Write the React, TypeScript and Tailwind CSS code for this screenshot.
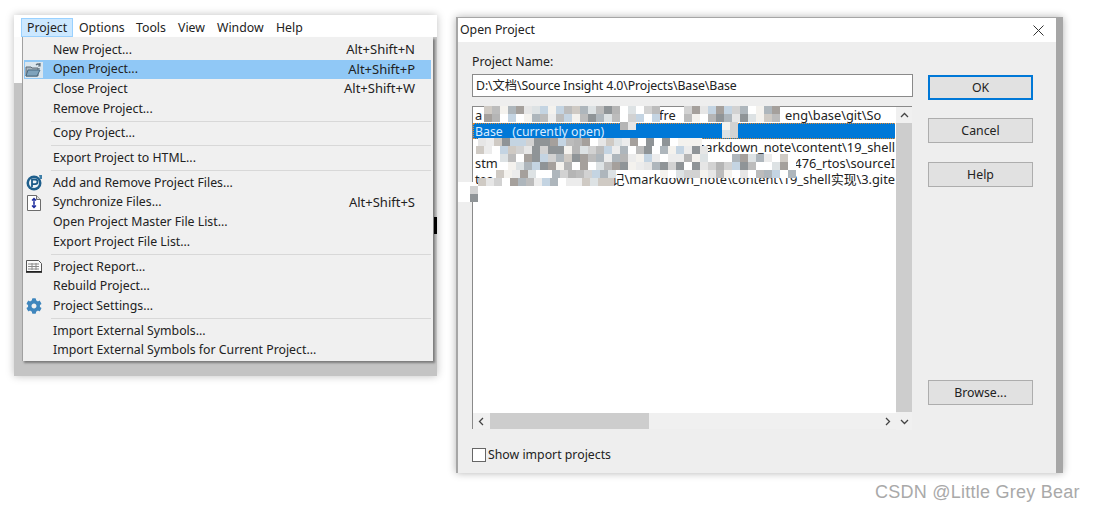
import { FaCog } from 'react-icons/fa'

const font = { fontFamily: '"Noto Sans", "Noto Sans CJK SC", sans-serif' }

const OpenIcon = () => (
  <svg width="18" height="16" viewBox="0 0 18 16" className="block">
    <rect x="0" y="0" width="18" height="16" fill="#dbe6ee" />
    <path d="M1 5h5l1 1h6v8H1z" fill="#a9b5bf" stroke="#5d6b76" strokeWidth="1" />
    <path d="M3 8h12l-3 6H1z" fill="#7fa3bc" stroke="#4a6a80" strokeWidth="1" />
    <path d="M11 3c2-2 3-1 4 0M15 1v3h-2M14 7v-1" fill="none" stroke="#5c6e7c" strokeWidth="1.2" />
  </svg>
)

const PIcon = () => (
  <svg width="17" height="17" viewBox="0 0 17 17" className="block">
    <circle cx="8" cy="9" r="7.5" fill="#1f5f8c" />
    <circle cx="8" cy="9" r="5" fill="#eef4f8" />
    <path d="M6 13V5.500h3.200a2.200 2.200 0 0 1 0 4.600H6" fill="none" stroke="#1a5a88" strokeWidth="1.800" />
    <path d="M13 1h3v4h-2z" fill="#3f7fa8" />
  </svg>
)

const SyncIcon = () => (
  <svg width="14" height="16" viewBox="0 0 14 16" className="block">
    <path d="M.5.500h9l4 4v11H.5z" fill="#fff" stroke="#6c6c6c" />
    <path d="M9.500.500v4h4" fill="#ddd" stroke="#6c6c6c" />
    <path d="M7 3.500v5M5 5.500l2-2 2 2" fill="none" stroke="#1b2a9c" strokeWidth="1.300" />
    <path d="M7 7.500v5M5 10.500l2 2 2-2" fill="none" stroke="#1b2a9c" strokeWidth="1.300" />
  </svg>
)

const ReportIcon = () => (
  <svg width="16" height="13" viewBox="0 0 16 13" className="block">
    <path d="M.5.500h12l3 3v8H.5z" fill="#fafafa" stroke="#555" />
    <path d="M2 4h11M2 6.500h11M2 9h11M6 3v7M10 3v7" stroke="#8a8a8a" strokeWidth="1" />
    <path d="M0 12h16" stroke="#111" strokeWidth="1.500" />
  </svg>
)

const menuItems: any[] = [
  { label: 'New Project...', keys: 'Alt+Shift+N' },
  { label: 'Open Project...', keys: 'Alt+Shift+P', icon: <OpenIcon />, active: true },
  { label: 'Close Project', keys: 'Alt+Shift+W' },
  { label: 'Remove Project...' },
  { sep: true },
  { label: 'Copy Project...' },
  { sep: true },
  { label: 'Export Project to HTML...' },
  { sep: true },
  { label: 'Add and Remove Project Files...', icon: <PIcon /> },
  { label: 'Synchronize Files...', keys: 'Alt+Shift+S', icon: <SyncIcon /> },
  { label: 'Open Project Master File List...' },
  { label: 'Export Project File List...' },
  { sep: true },
  { label: 'Project Report...', icon: <ReportIcon /> },
  { label: 'Rebuild Project...' },
  { label: 'Project Settings...', icon: <FaCog size={16} color="#3f86bd" /> },
  { sep: true },
  { label: 'Import External Symbols...' },
  { label: 'Import External Symbols for Current Project...' },
]

const menuBar = [
  { label: 'Project', cls: 'w-[52px] ml-[7px] border border-[#99d1ff] bg-[#cce8ff] text-[#222]' },
  { label: 'Options', cls: 'w-[57px] pl-[6px]' },
  { label: 'Tools', cls: 'w-[42px] pl-[6px]' },
  { label: 'View', cls: 'w-[39px] pl-[6px]' },
  { label: 'Window', cls: 'w-[59px] pl-[6px]' },
  { label: 'Help', cls: 'w-[40px] pl-[6px]' },
]

// redaction blur: [top, left, right] of each 8px band of cells
const mosaicBands = [
  [106, 484, 654], [106, 684, 780],
  [114, 484, 654], [114, 684, 780],
  [122, 620, 636], [122, 722, 738],
  [130, 722, 738],
  [138, 478, 696], [146, 476, 704],
  [154, 500, 796], [162, 500, 796],
  [170, 496, 612], [170, 660, 796],
  [178, 478, 612], [186, 470, 478], [194, 470, 478],
]
const mosaicColors = ['#e6e6e6', '#d2d2d2', '#bcbcbc', '#f4f2ee', '#cfcac4', '#aeb6bc', '#ffffff', '#dde2e4', '#a5a09c', '#c4d4e2', '#ececec', '#b5b5b5', '#ffffff', '#8f9497']

const Mosaic = () => {
  const cells: { x: number; y: number; c: string }[] = []
  let seed = 7
  mosaicBands.forEach(([y, a, b]) => {
    for (let x = a; x < b; x += 8) {
      seed = (seed * 31 + 11) % 1009
      cells.push({ x, y, c: mosaicColors[seed % mosaicColors.length] })
    }
  })
  return (
    <svg className="absolute left-0 top-0" width="1095" height="511">
      <rect x="458" y="182" width="18" height="20" fill="#fff" />
      {cells.map((c, i) => (
        <rect key={i} x={c.x} y={c.y} width="8" height="8" fill={c.c} />
      ))}
    </svg>
  )
}

const Button = ({ label, primary, cls }: { label: string; primary?: boolean; cls?: string }) => (
  <button
    className={`h-[25px] w-[105px] pt-px text-[12.3px] text-[#222] bg-[#e1e1e1] border ${
      primary ? 'border-2 border-[#0078d7]' : 'border-[#adadad]'
    } ${cls ?? ''}`}
  >
    {label}
  </button>
)

const Chevron = ({ d }: { d: string }) => (
  <svg width="9" height="9" viewBox="0 0 9 9" className="block">
    <path d={d} fill="none" stroke="#444" strokeWidth="1.300" />
  </svg>
)

export default function App() {
  return (
    <div className="relative h-[511px] w-[1095px] overflow-hidden bg-white" style={font}>
      <div className="flex items-start pl-[14px]">
        {/* menu screenshot */}
        <div className="mt-[15px] h-[361px] w-[423px] bg-[#c4c4c4] shadow-[0_0_8px_rgba(0,0,0,0.25)] relative">
          <div className="flex h-[22px] items-end bg-white text-[12.3px] text-[#222]">
            {menuBar.map((m) => (
              <div key={m.label} className={`flex h-[19px] items-center pt-px ${m.cls}`}>
                <span className={m.label === 'Project' ? 'pl-[5px]' : ''}>{m.label}</span>
              </div>
            ))}
          </div>
          <div className="flex">
            <div className="h-[46px] w-[8px] bg-[#fbfbfb]" />
            <div className="h-[324px] w-[411px] border-l border-[#a0a0a0] bg-[#f0f0f0] pt-[3px] pr-[2px] pl-[1px] shadow-[2px_2px_2px_#7c7c7c]">
              {menuItems.map((item, i) =>
                item.sep ? (
                  <div key={i} className="flex h-[5px] items-center pl-[27px]">
                    <div className="h-px w-full bg-[#d8d8d8]" />
                  </div>
                ) : (
                  <div
                    key={i}
                    className={`flex h-[19.7px] items-center text-[12.3px] text-[#222] ${item.active ? 'bg-[#90c8f6]' : ''}`}
                  >
                    <div className="flex w-[29px] shrink-0 items-center justify-center pr-[9px]">{item.icon}</div>
                    <span className="whitespace-nowrap">{item.label}</span>
                    {item.keys && <span className="ml-auto whitespace-nowrap pr-4 text-[13px]">{item.keys}</span>}
                  </div>
                ),
              )}
            </div>
          </div>
          <div className="absolute right-0 top-[202px] h-[17px] w-[3px] bg-black" />
        </div>

        {/* open project dialog */}
        <div className="ml-[19px] mt-[17px] h-[456px] w-[607px] border-t border-l-2 border-r-[7px] border-[#a6a6a6] bg-[#eeeeee] shadow-[0_0_8px_rgba(0,0,0,0.3)]">
          <div className="flex h-[24px] items-center justify-between bg-white pl-[2px] pr-[12px] text-[12.3px] text-[#222]">
            <span>Open Project</span>
            <svg width="11" height="11" viewBox="0 0 11 11">
              <path d="M.5.500l10 10M10.500.500l-10 10" stroke="#333" strokeWidth="1" />
            </svg>
          </div>
          <div className="flex pl-[14px]">
            <div className="w-[441px]">
              <div className="mt-[10px] h-[19px] text-[12.3px] leading-[19px] text-[#222]">Project Name:</div>
              <div className="mt-[3px] flex h-[23px] items-center border border-[#8a8a8a] bg-white pl-[3px] pt-px text-[12.3px] tracking-[-0.1px] text-[#222]">
                D:\文档\Source Insight 4.0\Projects\Base\Base
              </div>
              <div className="relative mt-[9px] h-[323px] w-[440px] border-l border-t border-[#8a8a8a] bg-white text-[12.8px] text-[#222]">
                <div className="flex h-[16px] whitespace-nowrap pl-[2px] leading-[17px]">
                  <span className="w-[184px]">a</span>
                  <span className="w-[126px]">fre</span>
                  <span className="w-[110px] overflow-hidden">eng\base\git\So</span>
                </div>
                <div className="h-[16px] w-[422px] border-y border-l border-dotted border-[#e88a2c] bg-[#0078d7] pl-[1px] text-[12.3px] leading-[15px] text-[#d8ecff]">
                  Base&nbsp;&nbsp;&nbsp;(currently open)
                </div>
                <div className="flex h-[16px] w-[422px] justify-end overflow-hidden whitespace-nowrap leading-[16px]">
                  markdown_note\content\19_shell
                </div>
                <div className="flex h-[16px] w-[422px] overflow-hidden whitespace-nowrap pl-[2px] leading-[16px]">
                  <span className="w-[323px]">stm</span>
                  <span>476_rtos\sourceI</span>
                </div>
                <div className="flex h-[16px] w-[422px] overflow-hidden whitespace-nowrap pl-[2px] leading-[16px]">
                  <span className="w-[137px]">tes</span>
                  <span>记\markdown_note\content\19_shell实现\3.gite</span>
                </div>

                {/* vertical scrollbar */}
                <div className="absolute right-0 top-0 flex h-[323px] w-[16px] flex-col bg-[#f0f0f0]">
                  <div className="flex h-[16px] items-center justify-center">
                    <Chevron d="M1 6l3.500-3.500L8 6" />
                  </div>
                  <div className="h-[289px] bg-[#cdcdcd]" />
                  <div className="flex h-[18px] items-center justify-center">
                    <Chevron d="M1 3l3.500 3.500L8 3" />
                  </div>
                </div>
                {/* horizontal scrollbar */}
                <div className="absolute bottom-0 left-0 flex h-[16px] w-[423px] items-center bg-[#f0f0f0]">
                  <div className="flex h-[16px] w-[17px] items-center justify-center">
                    <Chevron d="M6 1L2.500 4.500 6 8" />
                  </div>
                  <div className="h-[16px] w-[159px] bg-[#cdcdcd]" />
                  <div className="ml-auto flex h-[16px] w-[17px] items-center justify-center">
                    <Chevron d="M3 1l3.500 3.500L3 8" />
                  </div>
                </div>
              </div>
              <div className="mt-[17px] flex items-center text-[12.3px] text-[#222]">
                <div className="h-[14px] w-[14px] border border-[#666] bg-white" />
                <span className="ml-[2px]">Show import projects</span>
              </div>
            </div>
            <div className="ml-[15px] flex flex-col">
              <Button label="OK" primary cls="mt-[33px]" />
              <Button label="Cancel" cls="mt-[18px]" />
              <Button label="Help" cls="mt-[19px]" />
              <Button label="Browse..." cls="mt-[193px]" />
            </div>
          </div>
        </div>
      </div>

      <Mosaic />

      <div
        className="absolute left-[875px] top-[481px] whitespace-nowrap text-[18px] leading-[22px] tracking-[0.25px] text-[#a9a9a9]"
        style={{ fontFamily: '"Liberation Sans", sans-serif' }}
      >
        CSDN @Little Grey Bear
      </div>
    </div>
  )
}
